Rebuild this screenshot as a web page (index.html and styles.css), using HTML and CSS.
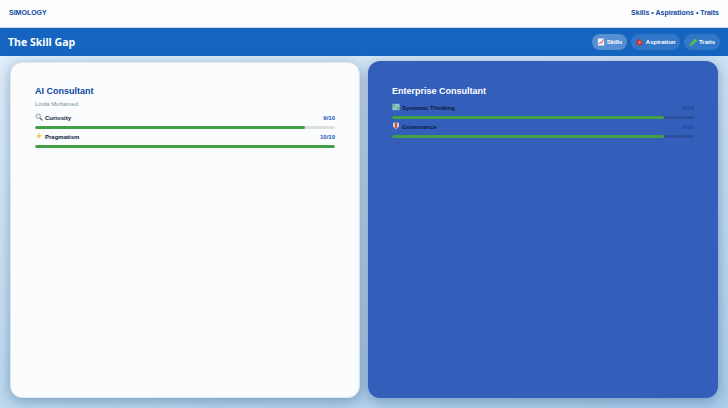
FILE: index.html
```html
<!DOCTYPE html>
<html lang="en">
<head>
<meta charset="utf-8">
<title>The Skill Gap</title>
<link rel="stylesheet" href="styles.css">
</head>
<body>
<nav class="topnav">
  <span class="brand">SIMOLOGY</span>
  <span class="crumbs">Skills • Aspirations • Traits</span>
</nav>
<header class="bar">
  <h1 class="bar-title">The Skill Gap</h1>
  <div class="tabs">
    <button class="tab tab-active">
      <svg class="ico" viewBox="0 0 10 10"><rect x="1" y="0.5" width="8" height="9" fill="#f1f1f4"/><path d="M1.5 8 L4 5.5 L5.5 6.5 L8.5 1.5" fill="none" stroke="#e0303c" stroke-width="1.1"/></svg>
      Skills
    </button>
    <button class="tab">
      <svg class="ico" viewBox="0 0 10 10"><circle cx="4.5" cy="5.5" r="3.9" fill="#c9303c"/><circle cx="4.5" cy="5.5" r="1.6" fill="#e87a80"/><path d="M5 5 L9 1.5" stroke="#3fa05a" stroke-width="1"/></svg>
      Aspiration
    </button>
    <button class="tab">
      <svg class="ico" viewBox="0 0 10 10"><path d="M0.500 7h2.500V4.500H5.500V1.500h4v3.500H7v2.500H4.500V9.500H0.500z" fill="#62c04a"/></svg>
      Traits
    </button>
  </div>
</header>
<main class="board">
  <section class="card card-light">
    <h2 class="card-title">AI Consultant</h2>
    <p class="person">Linda Mohamed</p>
    <div class="skill">
      <div class="skill-head">
        <span class="skill-name"><svg class="ico ico-up" viewBox="0 0 10 10"><circle cx="4" cy="4" r="2.900" fill="#e6eef5" stroke="#8a949c" stroke-width="1"/><path d="M6.200 6.200 L9.300 9.300" stroke="#5b5f66" stroke-width="1.500"/></svg>Curiosity</span>
        <span class="score">9/10</span>
      </div>
      <div class="track"><div class="fill" style="width:90%"></div></div>
    </div>
    <div class="skill">
      <div class="skill-head">
        <span class="skill-name"><svg class="ico ico-up" viewBox="0 0 10 10"><path d="M6.500 0 L1.500 5.800 H4.300 L3 10 L8.500 3.900 H5.400z" fill="#f7c948"/></svg>Pragmatism</span>
        <span class="score">10/10</span>
      </div>
      <div class="track"><div class="fill" style="width:100%"></div></div>
    </div>
  </section>
  <section class="card card-dark">
    <h2 class="card-title">Enterprise Consultant</h2>
    <div class="skill">
      <div class="skill-head">
        <span class="skill-name"><svg class="ico ico-up" viewBox="0 0 10 10"><rect x="0.500" y="1" width="9" height="8" fill="#8fc6d8"/><path d="M1 2h3v3H1zM6 5h3v3H6z" fill="#6bb36a"/></svg>Systemic Thinking</span>
        <span class="score">9/10</span>
      </div>
      <div class="track"><div class="fill" style="width:90%"></div></div>
    </div>
    <div class="skill">
      <div class="skill-head">
        <span class="skill-name"><svg class="ico ico-up" viewBox="0 0 10 10"><path d="M1.500 1h7v4.500L5 9.500 1.500 5.500z" fill="#e8e4dc"/><path d="M3.500 1h3v6L5 9 3.500 7z" fill="#d8503c"/></svg>Governance</span>
        <span class="score">9/10</span>
      </div>
      <div class="track"><div class="fill" style="width:90%"></div></div>
    </div>
  </section>
</main>
</body>
</html>
```

FILE: styles.css
```css
* { box-sizing: border-box; }
html, body { height: 100%; }
body {
  margin: 0;
  height: 408px;
  overflow: hidden;
  display: flex;
  flex-direction: column;
  font-family: "Liberation Sans", Arial, sans-serif;
  background: linear-gradient(165deg, #e6f2fc 0%, #a9cdea 100%);
}
.topnav {
  height: 28px;
  flex: none;
  display: flex;
  justify-content: space-between;
  align-items: center;
  padding: 0 9px 2px;
  background: #fbfdff;
  border-bottom: 1px solid #c8d8e6;
  font-size: 7px;
  font-weight: 700;
  color: #0d47a1;
}
.crumbs { color: #14479b; }
.bar {
  height: 28px;
  flex: none;
  display: flex;
  justify-content: space-between;
  align-items: center;
  padding: 0 8px;
  background: #1565c0;
}
.bar-title {
  margin: 0 0 1px;
  font-family: "Open Sans", sans-serif;
  font-size: 10.5px;
  font-weight: 700;
  color: #fff;
}
.tabs { display: flex; gap: 3.5px; }
.tab {
  display: flex;
  align-items: center;
  gap: 2px;
  height: 16px;
  padding: 0 5px;
  border: 0;
  border-radius: 8px;
  font: 700 6px "Liberation Sans", Arial, sans-serif;
  color: #fff;
  background: rgba(255, 255, 255, 0.12);
}
.tab-active { background: rgba(255, 255, 255, 0.28); }
.ico { width: 8px; height: 8px; flex: none; }
.ico-up { margin-top: -2px; }
.board {
  flex: 1;
  display: grid;
  grid-template-columns: 350px 350px;
  gap: 8px;
  padding: 5px 10px 10px;
}
.card {
  border-radius: 12px;
  padding: 24px;
  box-shadow: 0 3px 14px rgba(20, 60, 110, 0.4);
}
.card-light {
  margin-top: 1px;
  padding-top: 22px;
  background: #fbfcfe;
  border: 1px solid #dfe7ef;
}
.card-dark { background: #335fbb; }
.card-title {
  margin: 0;
  font-size: 9px;
  font-weight: 700;
  line-height: 12px;
  color: #0d47a1;
}
.card-dark .card-title { color: #fff; margin-bottom: 6px; }
.person {
  margin: 3px 0 5px;
  font-size: 6px;
  line-height: 8px;
  color: #78909c;
}
.skill { margin-bottom: 3px; }
.skill-head {
  display: flex;
  justify-content: space-between;
  align-items: center;
  height: 10px;
  margin-bottom: 3px;
  font-size: 6px;
  font-weight: 700;
}
.skill-name { display: flex; align-items: center; gap: 2px; color: #0a1a3a; }
.score { color: #1553b0; }
.card-dark .score { color: #1c4a9e; }
.track { height: 3px; border-radius: 2px; background: #dedfe1; overflow: hidden; }
.card-dark .track { background: #2c519f; }
.fill { height: 100%; border-radius: 2px; background: #43a047; }
```
